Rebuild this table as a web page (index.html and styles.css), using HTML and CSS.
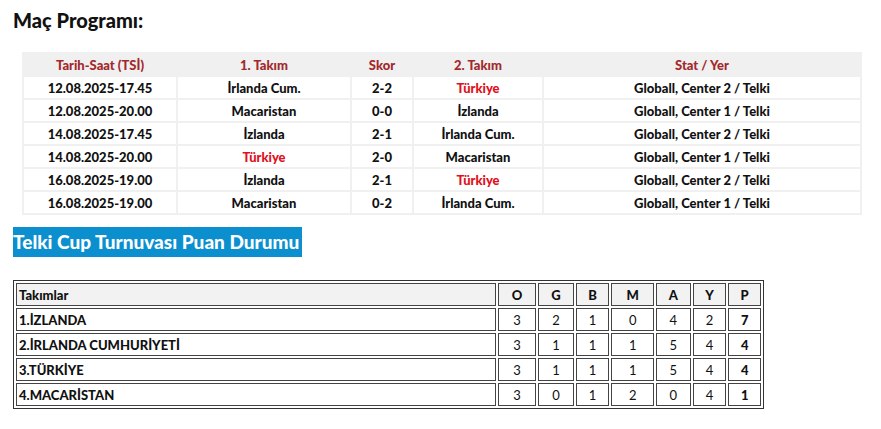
FILE: index.html
```html
<!DOCTYPE html>
<html lang="tr">
<head>
    <meta charset="UTF-8">
    <meta name="viewport" content="width=device-width, initial-scale=1.0">
    <title>Telki Cup</title>
    <link rel="stylesheet" href="styles.css">
</head>
<body>
    <h2 class="title">Maç Programı:</h2>

    <table class="program">
        <tr>
            <th class="c-date">Tarih-Saat (TSİ)</th>
            <th class="c-team">1. Takım</th>
            <th class="c-score">Skor</th>
            <th class="c-team2">2. Takım</th>
            <th>Stat / Yer</th>
        </tr>
        <tr><td>12.08.2025-17.45</td><td>İrlanda Cum.</td><td>2-2</td><td class="tr">Türkiye</td><td>Globall, Center 2 / Telki</td></tr>
        <tr><td>12.08.2025-20.00</td><td>Macaristan</td><td>0-0</td><td>İzlanda</td><td>Globall, Center 1 / Telki</td></tr>
        <tr><td>14.08.2025-17.45</td><td>İzlanda</td><td>2-1</td><td>İrlanda Cum.</td><td>Globall, Center 2 / Telki</td></tr>
        <tr><td>14.08.2025-20.00</td><td class="tr">Türkiye</td><td>2-0</td><td>Macaristan</td><td>Globall, Center 1 / Telki</td></tr>
        <tr><td>16.08.2025-19.00</td><td>İzlanda</td><td>2-1</td><td class="tr">Türkiye</td><td>Globall, Center 2 / Telki</td></tr>
        <tr><td>16.08.2025-19.00</td><td>Macaristan</td><td>0-2</td><td>İrlanda Cum.</td><td>Globall, Center 1 / Telki</td></tr>
    </table>

    <h3 class="standings-title"><span>Telki Cup Turnuvası Puan Durumu</span></h3>

    <table class="standings" border="1">
        <tr>
            <th class="team">Takımlar</th>
            <th>O</th><th>G</th><th>B</th><th>M</th><th>A</th><th>Y</th><th>P</th>
        </tr>
        <tr><td class="team">1.İZLANDA</td><td>3</td><td>2</td><td>1</td><td>0</td><td>4</td><td>2</td><td class="pts">7</td></tr>
        <tr><td class="team">2.İRLANDA CUMHURİYETİ</td><td>3</td><td>1</td><td>1</td><td>1</td><td>5</td><td>4</td><td class="pts">4</td></tr>
        <tr><td class="team">3.TÜRKİYE</td><td>3</td><td>1</td><td>1</td><td>1</td><td>5</td><td>4</td><td class="pts">4</td></tr>
        <tr><td class="team">4.MACARİSTAN</td><td>3</td><td>0</td><td>1</td><td>2</td><td>0</td><td>4</td><td class="pts">1</td></tr>
    </table>
</body>
</html>
```

FILE: styles.css
```css
body {
    margin: 0;
    padding: 7px 13px;
    font-family: Lato, "Liberation Sans", sans-serif;
    color: #111;
}
.title {
    font-size: 20px;
    font-weight: 900;
    margin: 0 0 19px 0;
    line-height: 26px;
}
.program {
    margin-left: 9px;
    width: 840px;
    border-collapse: collapse;
    font-size: 13px;
    font-weight: 900;
}
.program th,
.program td {
    border: 2px solid #f0f0f0;
    text-align: center;
    height: 19px;
    padding: 1px 4px;
}
.program th {
    background-color: #f0f0f0;
    color: #a3282c;
    font-weight: 900;
}
.program .c-date { width: 144px; }
.program .c-team { width: 164px; }
.program .c-score { width: 52px; }
.program .c-team2 { width: 120px; }
.program .tr {
    color: #e01020;
}
.standings-title {
    margin: 12px 0 23px 0;
    font-size: 19px;
    font-weight: 900;
    line-height: 30px;
}
.standings-title span {
    background-color: #0b8fcf;
    color: white;
    padding: 0 3px 0 0;
    display: inline-block;
}
.standings {
    width: 751px;
    border: 1px solid #333;
    border-spacing: 2px;
    font-size: 13px;
}
.standings th,
.standings td {
    border: 1px solid #444;
    text-align: center;
    height: 19px;
    padding: 1px 2px;
}
.standings th {
    background-color: #f2f2f2;
    font-weight: 900;
}
.standings .team {
    text-align: left;
    font-weight: 900;
}
.standings th.team {
    width: 474px;
}
.standings .pts {
    font-weight: 900;
}
```
